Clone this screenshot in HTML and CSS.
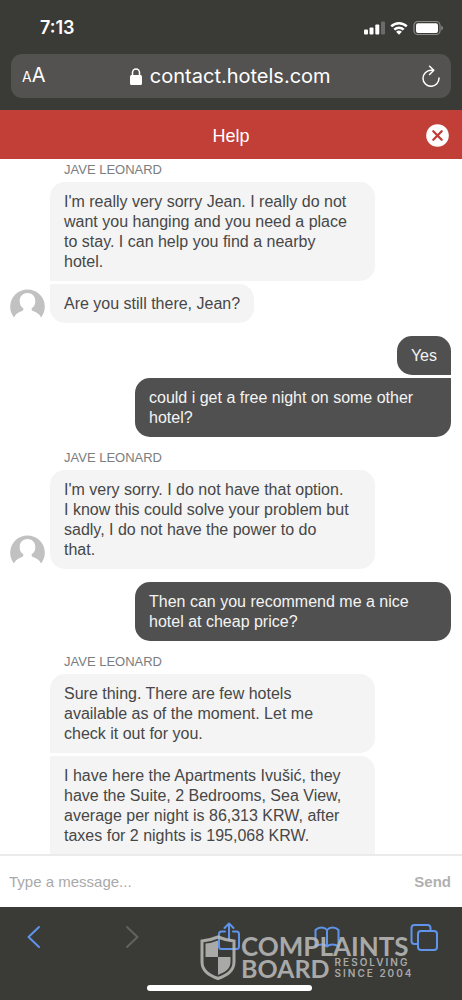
FILE: index.html
```html
<!DOCTYPE html>
<html lang="en">
<head>
<meta charset="utf-8">
<meta name="viewport" content="width=device-width, initial-scale=1">
<title>Help</title>
<link rel="stylesheet" href="styles.css">
</head>
<body>
<div class="screen">
  <header class="browser">
    <div class="status">
      <span class="time">7:13</span>
      <svg class="indicators" width="80" height="16" viewBox="0 0 80 16" aria-hidden="true">
        <g fill="#fff">
          <rect x="1" y="9.500" width="4" height="5" rx="1"/>
          <rect x="6.500" y="7.500" width="4" height="7" rx="1"/>
          <rect x="12.300" y="4.500" width="4" height="10" rx="1"/>
          <rect x="18" y="1.500" width="4" height="13" rx="1" opacity=".25"/>
          <path d="M36 14.700 33.100 11.800A4.200 4.200 0 0 1 38.900 11.800Z"/>
        </g>
        <path d="M31.300 9.600A6.700 6.700 0 0 1 40.700 9.600M28.200 6.400A11.200 11.200 0 0 1 43.800 6.400" fill="none" stroke="#fff" stroke-width="2.500"/>
        <rect x="51" y="1.500" width="26" height="13" rx="3.800" fill="none" stroke="#8b8b89" stroke-width="1.200"/>
        <rect x="53" y="3.300" width="22" height="9.600" rx="2" fill="#fff"/>
        <path d="M78.300 5.500Q80 6.500 80 8T78.300 10.500Z" fill="#8b8b89"/>
      </svg>
    </div>
    <div class="address">
      <button class="plain textsize" aria-label="Text size"><span class="small-a">A</span>A</button>
      <div class="site">
        <svg width="12" height="17" viewBox="0 0 12 17" aria-hidden="true"><rect y="7" width="12" height="10" rx="1.500" fill="#fff"/><path d="M2.500 8V4.800a3.500 3.800 0 0 1 7 0V8" fill="none" stroke="#fff" stroke-width="1.500"/></svg>
        <span>contact.hotels.com</span>
      </div>
      <button class="plain reload" aria-label="Reload">
        <svg width="20" height="22" viewBox="0 0 20 22" fill="none" stroke="#fff" stroke-width="1.500" stroke-linecap="round" stroke-linejoin="round"><path d="M12.300 5.300H10A8 8 0 1 0 18 13M8.600 1.300 12.800 5.300 8.600 9.500"/></svg>
      </button>
    </div>
  </header>

  <div class="helpbar">
    <h1>Help</h1>
    <button class="plain close" aria-label="Close">
      <svg width="23" height="23" viewBox="0 0 23 23"><circle cx="11.500" cy="11.500" r="11.300" fill="#fff"/><path d="M7.300 7.300 15.700 15.700M15.700 7.300 7.300 15.700" stroke="#bf3d36" stroke-width="2.300" stroke-linecap="round"/></svg>
    </button>
  </div>

  <main class="chat">
    <section class="group received">
      <h2>JAVE LEONARD</h2>
      <div class="row">
        <svg class="avatar" width="35" height="32" viewBox="0 0 35 32" aria-hidden="true"><path d="M4 30.500A17.300 17.300 0 1 1 31 30.500Q29.500 26 23 24C21.500 23.500 21.300 22 22 21C24.500 19.500 25.300 17 25.300 14C25.300 9 22 6 17.500 6S9.700 9 9.700 14C9.700 17 10.500 19.500 13 21C13.700 22 13.500 23.500 12 24Q5.500 26 4 30.500Z" fill="#c1c1c1"/></svg>
        <div class="bubbles">
          <p class="bubble long">I'm really very sorry Jean. I really do not want you hanging and you need a place to stay. I can help you find a nearby hotel.</p>
          <p class="bubble">Are you still there, Jean?</p>
        </div>
      </div>
    </section>

    <section class="group sent">
      <div class="bubbles">
        <p class="bubble">Yes</p>
        <p class="bubble">could i get a free night on some other hotel?</p>
      </div>
    </section>

    <section class="group received">
      <h2>JAVE LEONARD</h2>
      <div class="row">
        <svg class="avatar" width="35" height="32" viewBox="0 0 35 32" aria-hidden="true"><path d="M4 30.500A17.300 17.300 0 1 1 31 30.500Q29.500 26 23 24C21.500 23.500 21.300 22 22 21C24.500 19.500 25.300 17 25.300 14C25.300 9 22 6 17.500 6S9.700 9 9.700 14C9.700 17 10.500 19.500 13 21C13.700 22 13.500 23.500 12 24Q5.500 26 4 30.500Z" fill="#c1c1c1"/></svg>
        <div class="bubbles">
          <p class="bubble long">I'm very sorry. I do not have that option. I know this could solve your problem but sadly, I do not have the power to do that.</p>
        </div>
      </div>
    </section>

    <section class="group sent">
      <div class="bubbles">
        <p class="bubble">Then can you recommend me a nice hotel at cheap price?</p>
      </div>
    </section>

    <section class="group received">
      <h2>JAVE LEONARD</h2>
      <div class="row">
        <div class="avatar-space"></div>
        <div class="bubbles">
          <p class="bubble long">Sure thing. There are few hotels available as of the moment. Let me check it out for you.</p>
          <p class="bubble long continued">I have here the Apartments Ivušić, they have the Suite, 2 Bedrooms, Sea View, average per night is 86,313 KRW, after taxes for 2 nights is 195,068 KRW.</p>
        </div>
      </div>
    </section>
  </main>

  <form class="composer">
    <input type="text" aria-label="Message" placeholder="Type a message...">
    <button class="plain send" type="button">Send</button>
  </form>

  <footer class="toolbar">
    <nav class="tools" aria-label="Browser">
      <button class="plain" aria-label="Back"><svg width="28" height="32" viewBox="0 0 28 32"><path d="M19 6 8.500 16 19 26"/></svg></button>
      <button class="plain dim" aria-label="Forward"><svg width="28" height="32" viewBox="0 0 28 32"><path d="M9 6 19.500 16 9 26"/></svg></button>
      <button class="plain" aria-label="Share"><svg width="28" height="32" viewBox="0 0 28 32"><path d="M10 10.500H6.500Q4 10.500 4 13V25.500Q4 28 6.500 28H21.500Q24 28 24 25.500V13Q24 10.500 21.500 10.500H18M14 19V3M9.500 7 14 2.500 18.500 7"/></svg></button>
      <button class="plain" aria-label="Bookmarks"><svg width="28" height="32" viewBox="0 0 28 32"><path d="M14 9Q12 6.500 8.500 6.500T2.500 9V25.500Q5 23.500 8.500 23.500T14 25.500ZM14 9Q16 6.500 19.500 6.500T25.500 9V25.500Q23 23.500 19.500 23.500T14 25.500"/></svg></button>
      <button class="plain" aria-label="Tabs"><svg width="28" height="32" viewBox="0 0 28 32"><rect x="8" y="10" width="19" height="19" rx="3"/><path d="M8 23H4.500Q1.500 23 1.500 20V7Q1.500 4 4.500 4H17.500Q20.500 4 20.500 7V10"/></svg></button>
    </nav>
    <div class="home"></div>
    <div class="watermark">
      <svg width="36" height="45" viewBox="0 0 36 45" aria-hidden="true"><path d="M2 6Q11 5 18 2Q25 5 34 6V27C34 36 27 40 18 43.500C9 40 2 36 2 27Z" fill="none" stroke="#bdbdbc" stroke-width="3"/><path d="M18 5.500V22H5.500V8.500Q12 8 18 5.500ZM18 22H30.500V27C30.500 34 25 37 18 40Z" fill="#bdbdbc"/></svg>
      <div class="brand">
        <div class="brand-top">COMPLAINTS</div>
        <div class="brand-bottom"><span class="board">BOARD</span><span class="tagline">RESOLVING<br>SINCE 2004</span></div>
      </div>
    </div>
  </footer>
</div>
</body>
</html>
```
FILE: styles.css
```css
* { box-sizing: border-box; }
body {
  margin: 0;
  background: #fff;
  color: #474747;
  font: 16px/20px "Liberation Sans", Arial, sans-serif;
}
h1, h2, p { margin: 0; font-weight: 400; }
svg { display: block; }
.plain {
  border: 0;
  padding: 0;
  background: none;
  color: inherit;
  font: inherit;
}
.screen {
  height: 100vh;
  display: flex;
  flex-direction: column;
}

.browser {
  flex: none;
  padding: 0 11px 12px;
  background: #3a3a37;
  color: #fff;
  font-family: Inter, sans-serif;
}
.status {
  height: 54px;
  display: flex;
  align-items: center;
  justify-content: space-between;
  padding: 2px 8px 0 29px;
}
.time { font-size: 18px; font-weight: 600; }
.address {
  height: 44px;
  display: flex;
  align-items: center;
  justify-content: space-between;
  padding: 0 10px 0 11px;
  border-radius: 11px;
  background: #535250;
}
.textsize { font-size: 20px; }
.small-a { font-size: 14px; }
.site {
  display: flex;
  align-items: center;
  gap: 8px;
  margin-right: 6px;
  font-size: 20px;
}

.helpbar {
  flex: none;
  height: 49px;
  display: grid;
  grid-template-columns: 1fr auto 1fr;
  align-items: center;
  padding: 2px 13px 0;
  background: #c13f37;
  color: #fff;
}
.helpbar h1 { grid-column: 2; font-size: 18px; }
.close { justify-self: end; }

.chat {
  flex: 1;
  min-height: 0;
  overflow: hidden;
  display: flex;
  flex-direction: column;
  gap: 13px;
  padding: 3px 11px 0 10px;
}
.group { flex: none; }
.group h2 {
  margin: 0 0 4px 54px;
  font-size: 13px;
  line-height: 16px;
  color: #7b7d80;
}
.row { display: flex; align-items: flex-end; gap: 5px; }
.avatar { flex: none; margin-bottom: 4px; }
.avatar-space { flex: none; width: 35px; }
.bubbles {
  display: flex;
  flex-direction: column;
  align-items: flex-start;
  gap: 3px;
  max-width: 325px;
}
.bubble {
  padding: 10px 14px 9px;
  border-radius: 0 15px 15px 0;
  background: #f4f4f4;
}
.bubble.long { padding-right: 26px; }
.bubble:first-child { border-top-left-radius: 15px; }
.bubble:last-child { border-bottom-left-radius: 15px; }
.bubble.continued { padding-bottom: 24px; }
.sent { display: flex; justify-content: flex-end; }
.sent .bubbles { align-items: flex-end; max-width: 316px; }
.sent .bubble {
  border-radius: 15px 0 0 15px;
  background: #505050;
  color: #f4f4f4;
}
.sent .bubble:first-child { border-top-right-radius: 15px; }
.sent .bubble:last-child { border-bottom-right-radius: 15px; }

.composer {
  flex: none;
  height: 53px;
  display: flex;
  align-items: center;
  padding: 0 11px 0 9px;
  border-top: 2px solid #ebebeb;
  background: #fff;
}
.composer input {
  flex: 1;
  min-width: 0;
  border: 0;
  padding: 0;
  outline: 0;
  background: none;
  color: #474747;
  font: inherit;
  font-size: 15px;
}
.composer input::placeholder { color: #a9a9a9; opacity: 1; }
.send { color: #b0b0b0; font-size: 15px; font-weight: 700; }

.toolbar {
  flex: none;
  position: relative;
  height: 93px;
  padding: 14px 24px 9px 20px;
  display: flex;
  flex-direction: column;
  align-items: center;
  justify-content: space-between;
  background: #3a3a37;
}
.tools { width: 100%; display: flex; justify-content: space-between; }
.tools svg {
  fill: none;
  stroke: #5f94ea;
  stroke-width: 2;
  stroke-linecap: round;
  stroke-linejoin: round;
}
.tools .dim svg { stroke: #62625f; }
.home {
  width: 165px;
  height: 6px;
  border-radius: 3px;
  background: #fff;
}
.watermark {
  position: absolute;
  left: 200px;
  top: 28px;
  display: flex;
  gap: 5px;
  color: #bdbdbc;
  opacity: .85;
  pointer-events: none;
  font-family: Lato, sans-serif;
  font-weight: 700;
}
.brand-top { font-size: 26px; line-height: 22px; }
.brand-bottom { display: flex; align-items: center; gap: 5px; }
.board { font-size: 25px; line-height: 22px; }
.tagline {
  font-family: Inter, sans-serif;
  font-size: 10px;
  font-weight: 600;
  line-height: 11px;
  letter-spacing: 2px;
}
```
